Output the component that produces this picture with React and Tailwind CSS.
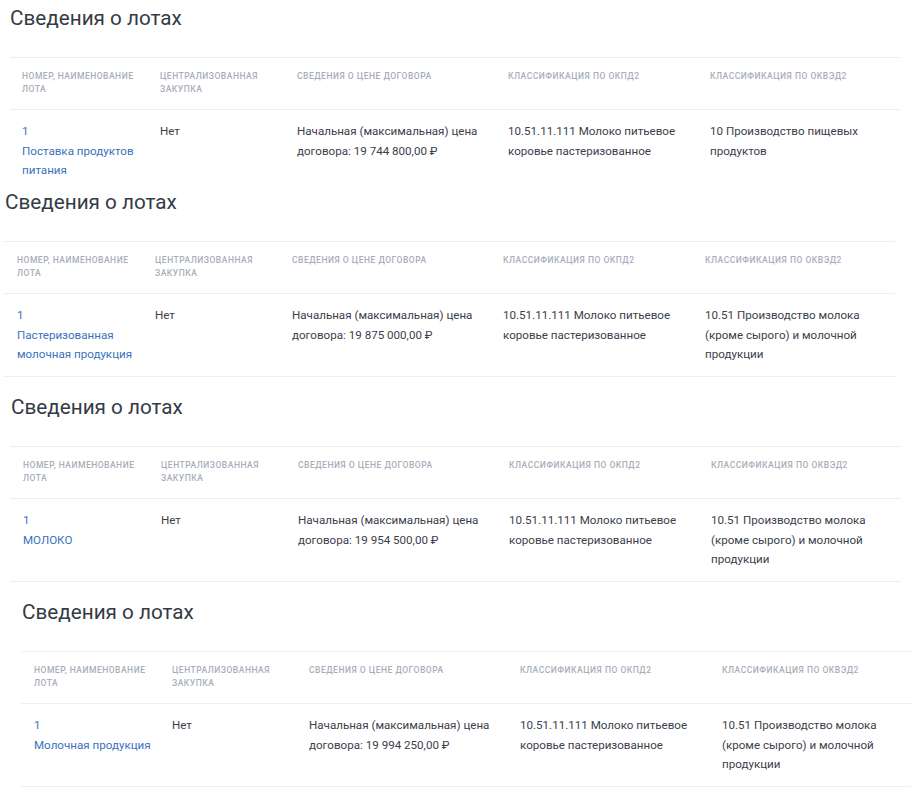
const lots = [
  {
    offset: 'ml-[10px]',
    clip: 'h-[184px] overflow-hidden',
    gap: '',
    name: 'Поставка продуктов питания',
    price: '19 744 800,00 ₽',
    okved: '10 Производство пищевых продуктов',
  },
  {
    offset: 'ml-[5px]',
    clip: '',
    gap: '',
    name: 'Пастеризованная молочная продукция',
    price: '19 875 000,00 ₽',
    okved: '10.51 Производство молока (кроме сырого) и молочной продукции',
  },
  {
    offset: 'ml-[11px]',
    clip: '',
    gap: 'mt-[12px]',
    name: 'МОЛОКО',
    price: '19 954 500,00 ₽',
    okved: '10.51 Производство молока (кроме сырого) и молочной продукции',
  },
  {
    offset: 'ml-[22px]',
    clip: '',
    gap: 'mt-[12px]',
    name: 'Молочная продукция',
    price: '19 994 250,00 ₽',
    okved: '10.51 Производство молока (кроме сырого) и молочной продукции',
  },
]

const heads = [
  'Номер, наименование лота',
  'Централизованная закупка',
  'Сведения о цене договора',
  'Классификация по ОКПД2',
  'Классификация по ОКВЭД2',
]

function LotBlock({ lot }) {
  return (
    <section className={`${lot.offset} ${lot.gap} ${lot.clip} shrink-0`}>
      <h2 className="text-[20.7px] leading-[28px] text-[#353b46] pt-[4px]">Сведения о лотах</h2>

      <div className="-ml-px mt-[25px] w-[891px] border-t border-[#eceef2]">
        {/* header row */}
        <div className="grid grid-cols-[138px_137px_211px_202px_1fr] pl-[13px] pt-[12px] pb-[13px] border-b border-[#eceef2]">
          {heads.map((h) => (
            <div
              key={h}
              className="pr-4 text-[8.5px] leading-[13px] font-medium uppercase tracking-[0.06em] text-[#a8adba]"
            >
              {h}
            </div>
          ))}
        </div>

        {/* data row */}
        <div className="grid grid-cols-[138px_137px_211px_202px_1fr] pl-[13px] pt-[12px] h-[83px] border-b border-[#eceef2] text-[11.6px] leading-[19.5px] text-[#3b404b]">
          <div className="pr-4 text-[#3a72bd]">
            <div>1</div>
            <div>{lot.name}</div>
          </div>
          <div className="pr-4">Нет</div>
          <div className="pr-6">Начальная (максимальная) цена договора: {lot.price}</div>
          <div className="pr-4">10.51.11.111 Молоко питьевое коровье пастеризованное</div>
          <div className="pr-4">{lot.okved}</div>
        </div>
      </div>
    </section>
  )
}

export default function App() {
  return (
    <div className="w-[911px] h-[800px] overflow-hidden bg-white font-['Roboto',sans-serif] flex flex-col">
      {lots.map((lot, i) => (
        <LotBlock key={i} lot={lot} />
      ))}
    </div>
  )
}
